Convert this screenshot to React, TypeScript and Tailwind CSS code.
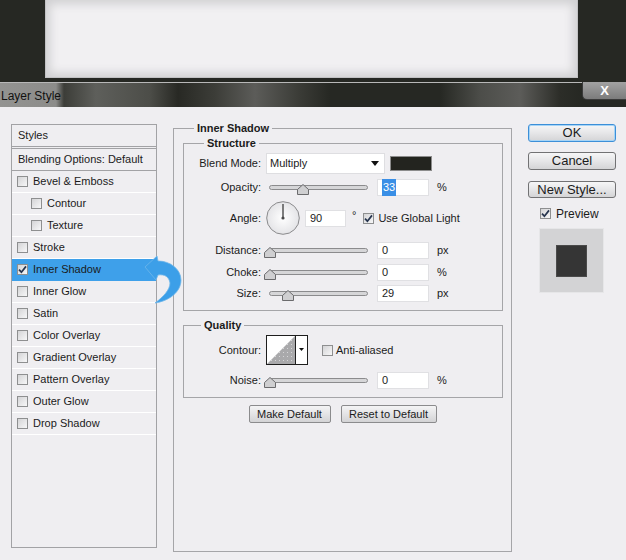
import React from "react";

const styleRows = [
  { name: "Bevel & Emboss" },
  { name: "Contour", indent: true },
  { name: "Texture", indent: true },
  { name: "Stroke" },
  { name: "Inner Shadow", checked: true, selected: true },
  { name: "Inner Glow" },
  { name: "Satin" },
  { name: "Color Overlay" },
  { name: "Gradient Overlay" },
  { name: "Pattern Overlay" },
  { name: "Outer Glow" },
  { name: "Drop Shadow" },
];

function Check({ checked }: { checked?: boolean }) {
  return (
    <span className="w-[11px] h-[11px] shrink-0 border border-[#8e8f90] bg-[linear-gradient(135deg,#d4d4d6,#f7f7f8)] flex items-center justify-center">
      {checked && (
        <svg width="9" height="9" viewBox="0 0 9 9">
          <path d="M1 4.6 L3.4 7.2 L8 1.4" stroke="#27354f" strokeWidth="1.7" fill="none" />
        </svg>
      )}
    </span>
  );
}

function Slider({ at }: { at: number }) {
  return (
    <div className="relative ml-[8px] w-[99px] h-[5px] rounded-full border border-[#8b8b8d] bg-[#d6d6d8]">
      <svg
        className="absolute top-[-2px]"
        style={{ left: at - 6 }}
        width="12"
        height="11"
        viewBox="0 0 12 11"
      >
        <path d="M6 0.5 L11.5 5.5 L11.5 10.5 L0.5 10.5 L0.5 5.5 Z" fill="#cfcfd1" stroke="#6b6b6d" />
      </svg>
    </div>
  );
}

function Field({ value, w = "w-[52px]", selected }: { value: string; w?: string; selected?: boolean }) {
  return (
    <div className={`${w} h-[17px] bg-white border border-[#e0e0e3] flex items-center pl-[4px]`}>
      {selected ? <span className="bg-[#3a8fe6] text-white px-[1px]">{value}</span> : value}
    </div>
  );
}

function Row({ label, className, children }: { label: string; className: string; children: React.ReactNode }) {
  return (
    <div className={`flex items-center ${className}`}>
      <span className="w-[77px] text-right shrink-0">{label}</span>
      {children}
    </div>
  );
}

function PsButton({ label, w }: { label: string; w: string }) {
  return (
    <div className={`${w} h-[18px] border border-[#8b8b8d] rounded-[2px] bg-[linear-gradient(#f4f4f5,#e4e4e6_50%,#d3d3d5)] flex items-center justify-center`}>
      {label}
    </div>
  );
}

export default function App() {
  return (
    <div className="relative w-[626px] h-[560px] overflow-hidden bg-[#efeef1] font-['Liberation_Sans',Arial,sans-serif] text-[11px] text-[#1b1b1b]">
      {/* document canvas behind the dialog */}
      <div className="h-[82px] bg-[#262823] pl-[45px]">
        <div className="w-[533px] h-[78px] bg-[#f1f0f2] border-x border-b border-[#c2c2c4] shadow-[inset_0_0_10px_4px_#d0d0d2]" />
      </div>

      {/* title bar */}
      <div className="h-[25px] flex border-t border-[#b8b8b8] bg-[linear-gradient(90deg,#939391_0,#8c8c8a_56px,#3c3d38_64px,#5e5f5b_96px,#4c4d48_150px,#282924_178px,#3c3d38_215px,#5c5c59_255px,#3a3b36_300px,#262823_330px,#262823_440px,#4c4d49_480px,#5c5c59_520px,#2c2d28_560px,#262823_582px)]">
        <span className="pl-[1px] text-[12px] leading-[26px] text-[#111]">Layer Style</span>
        <div className="ml-auto -mt-[1px] w-[44px] h-[18px] rounded-bl-[5px] border-l border-b border-[#3a3a3a] bg-[linear-gradient(#a2a2a2,#7c7c7c)] flex items-center justify-center text-[13px] font-bold text-white">
          X
        </div>
      </div>

      {/* dialog body */}
      <div className="flex h-[453px]">
        {/* styles list */}
        <div className="ml-[11px] mt-[17px] w-[146px] h-[424px] border border-[#a2a2a5] flex flex-col">
          <div className="h-[22px] border-b border-[#a2a2a5] flex items-center pl-[6px]">Styles</div>
          <div className="mt-[1px] h-[23px] border-y border-[#a2a2a5] flex items-center pl-[6px]">
            Blending Options: Default
          </div>
          {styleRows.map((r) => (
            <div
              key={r.name}
              className={`h-[22px] border-b flex items-center ${r.indent ? "pl-[19px]" : "pl-[5px]"} ${
                r.selected ? "bg-[#3ea0ea] border-[#3ea0ea]" : "border-white"
              }`}
            >
              <Check checked={r.checked} />
              <span className="ml-[5px]">{r.name}</span>
            </div>
          ))}
        </div>

        {/* settings */}
        <fieldset className="ml-[16px] mt-[14px] w-[339px] h-[431px] min-w-0 border border-[#a5a5a8]">
          <legend className="ml-[20px] px-[3px] font-bold leading-[14px]">Inner Shadow</legend>

          <fieldset className="ml-[9px] mt-[1px] w-[320px] min-w-0 border border-[#a5a5a8] pb-[8px]">
            <legend className="ml-[20px] px-[3px] font-bold leading-[14px]">Structure</legend>

            <Row label="Blend Mode:" className="mt-[3px] h-[21px]">
              <div className="ml-[5px] w-[119px] h-[21px] bg-white border border-[#dedee1] flex items-center pl-[3px]">
                Multiply
                <svg className="ml-auto mr-[5px]" width="8" height="5" viewBox="0 0 8 5">
                  <path d="M0 0 H8 L4 5 Z" fill="#111" />
                </svg>
              </div>
              <div className="ml-[5px] w-[42px] h-[15px] bg-[#23241f] border border-[#8c8c8c]" />
            </Row>

            <Row label="Opacity:" className="mt-[5px] h-[17px]">
              <Slider at={33} />
              <div className="ml-[9px]">
                <Field value="33" selected />
              </div>
              <span className="ml-[8px]">%</span>
            </Row>

            <Row label="Angle:" className="mt-[5px] h-[34px]">
              <svg className="ml-[5px]" width="34" height="34" viewBox="0 0 34 34">
                <defs>
                  <radialGradient id="dial" cx="50%" cy="50%" r="50%">
                    <stop offset="0%" stopColor="#ffffff" />
                    <stop offset="100%" stopColor="#e4e4e7" />
                  </radialGradient>
                </defs>
                <circle cx="17" cy="17" r="16.3" fill="url(#dial)" stroke="#8a8a8c" />
                <line x1="17" y1="3" x2="17" y2="17" stroke="#4a4a4a" strokeWidth="1.4" />
                <circle cx="17" cy="17" r="1.6" fill="#4a4a4a" />
              </svg>
              <div className="ml-[5px]">
                <Field value="90" w="w-[41px]" />
              </div>
              <span className="ml-[6px] self-start mt-[6px]">°</span>
              <span className="ml-[7px]">
                <Check checked />
              </span>
              <span className="ml-[4px]">Use Global Light</span>
            </Row>

            <Row label="Distance:" className="mt-[7px] h-[17px]">
              <Slider at={0} />
              <div className="ml-[9px]">
                <Field value="0" />
              </div>
              <span className="ml-[8px]">px</span>
            </Row>

            <Row label="Choke:" className="mt-[5px] h-[17px]">
              <Slider at={0} />
              <div className="ml-[9px]">
                <Field value="0" />
              </div>
              <span className="ml-[8px]">%</span>
            </Row>

            <Row label="Size:" className="mt-[4px] h-[17px]">
              <Slider at={18} />
              <div className="ml-[9px]">
                <Field value="29" />
              </div>
              <span className="ml-[8px]">px</span>
            </Row>
          </fieldset>

          <fieldset className="ml-[9px] mt-[7px] w-[320px] min-w-0 border border-[#a5a5a8] pb-[8px]">
            <legend className="ml-[17px] px-[3px] font-bold leading-[14px]">Quality</legend>

            <Row label="Contour:" className="mt-[3px] h-[30px]">
              <svg className="ml-[5px]" width="42" height="30" viewBox="0 0 42 30">
                <defs>
                  <pattern id="dots" width="4" height="4" patternUnits="userSpaceOnUse">
                    <rect width="4" height="4" fill="#a9a9ab" />
                    <rect x="1" y="1" width="1" height="1" fill="#d6d6d8" />
                  </pattern>
                </defs>
                <rect x="0.5" y="0.5" width="41" height="29" fill="#fff" stroke="#1e1e1e" />
                <polygon points="1,29 29,1 29,29" fill="url(#dots)" />
                <line x1="29.5" y1="0" x2="29.5" y2="30" stroke="#1e1e1e" />
                <polygon points="33,13 38,13 35.5,16" fill="#111" />
              </svg>
              <span className="ml-[14px]">
                <Check />
              </span>
              <span className="ml-[3px]">Anti-aliased</span>
            </Row>

            <Row label="Noise:" className="mt-[7px] h-[17px]">
              <Slider at={0} />
              <div className="ml-[9px]">
                <Field value="0" />
              </div>
              <span className="ml-[8px]">%</span>
            </Row>
          </fieldset>

          <div className="mt-[7px] flex justify-center gap-[10px]">
            <PsButton label="Make Default" w="w-[82px]" />
            <PsButton label="Reset to Default" w="w-[96px]" />
          </div>
        </fieldset>

        {/* buttons and preview */}
        <div className="ml-[16px] mt-[17px] w-[88px] flex flex-col text-[13px]">
          <div className="h-[18px] rounded-[3px] border border-[#3c8fd8] shadow-[inset_0_0_0_1px_#a6d4f6] bg-[linear-gradient(#f6f6f7,#e6e6e8_50%,#d4d4d6)] flex items-center justify-center">
            OK
          </div>
          <div className="mt-[10px] h-[18px] rounded-[3px] border border-[#727274] bg-[linear-gradient(#f6f6f7,#e6e6e8_50%,#d4d4d6)] flex items-center justify-center">
            Cancel
          </div>
          <div className="mt-[11px] h-[17px] rounded-[3px] border border-[#727274] bg-[linear-gradient(#f6f6f7,#e6e6e8_50%,#d4d4d6)] flex items-center justify-center">
            New Style...
          </div>
          <div className="mt-[9px] h-[13px] flex items-center pl-[12px] text-[12px]">
            <Check checked />
            <span className="ml-[5px]">Preview</span>
          </div>
          <div className="mt-[8px] ml-[11px] w-[65px] h-[65px] border border-[#e6e6e8] bg-[#d3d3d5] flex items-center justify-center">
            <div className="w-[31px] h-[32px] bg-[#353535] bg-[radial-gradient(#5c5c5c_0.5px,transparent_0.7px)] bg-[length:2px_2px] border border-[#4a4a4a]" />
          </div>
        </div>
      </div>

      {/* arrow pointing at the selected style */}
      <svg className="absolute left-[140px] top-[252px]" width="46" height="56" viewBox="0 0 46 56">
        <path
          d="M5 15 L17 4 L18 9 C30 9 41 17 41 28 C41 40 29 49 15 51 C23 45 30 38 30 31 C29 25 25 22 18 23 L16 28 Z"
          fill="#3c9fe8"
          stroke="#6fb6ea"
          strokeWidth="0.8"
        />
      </svg>
    </div>
  );
}
